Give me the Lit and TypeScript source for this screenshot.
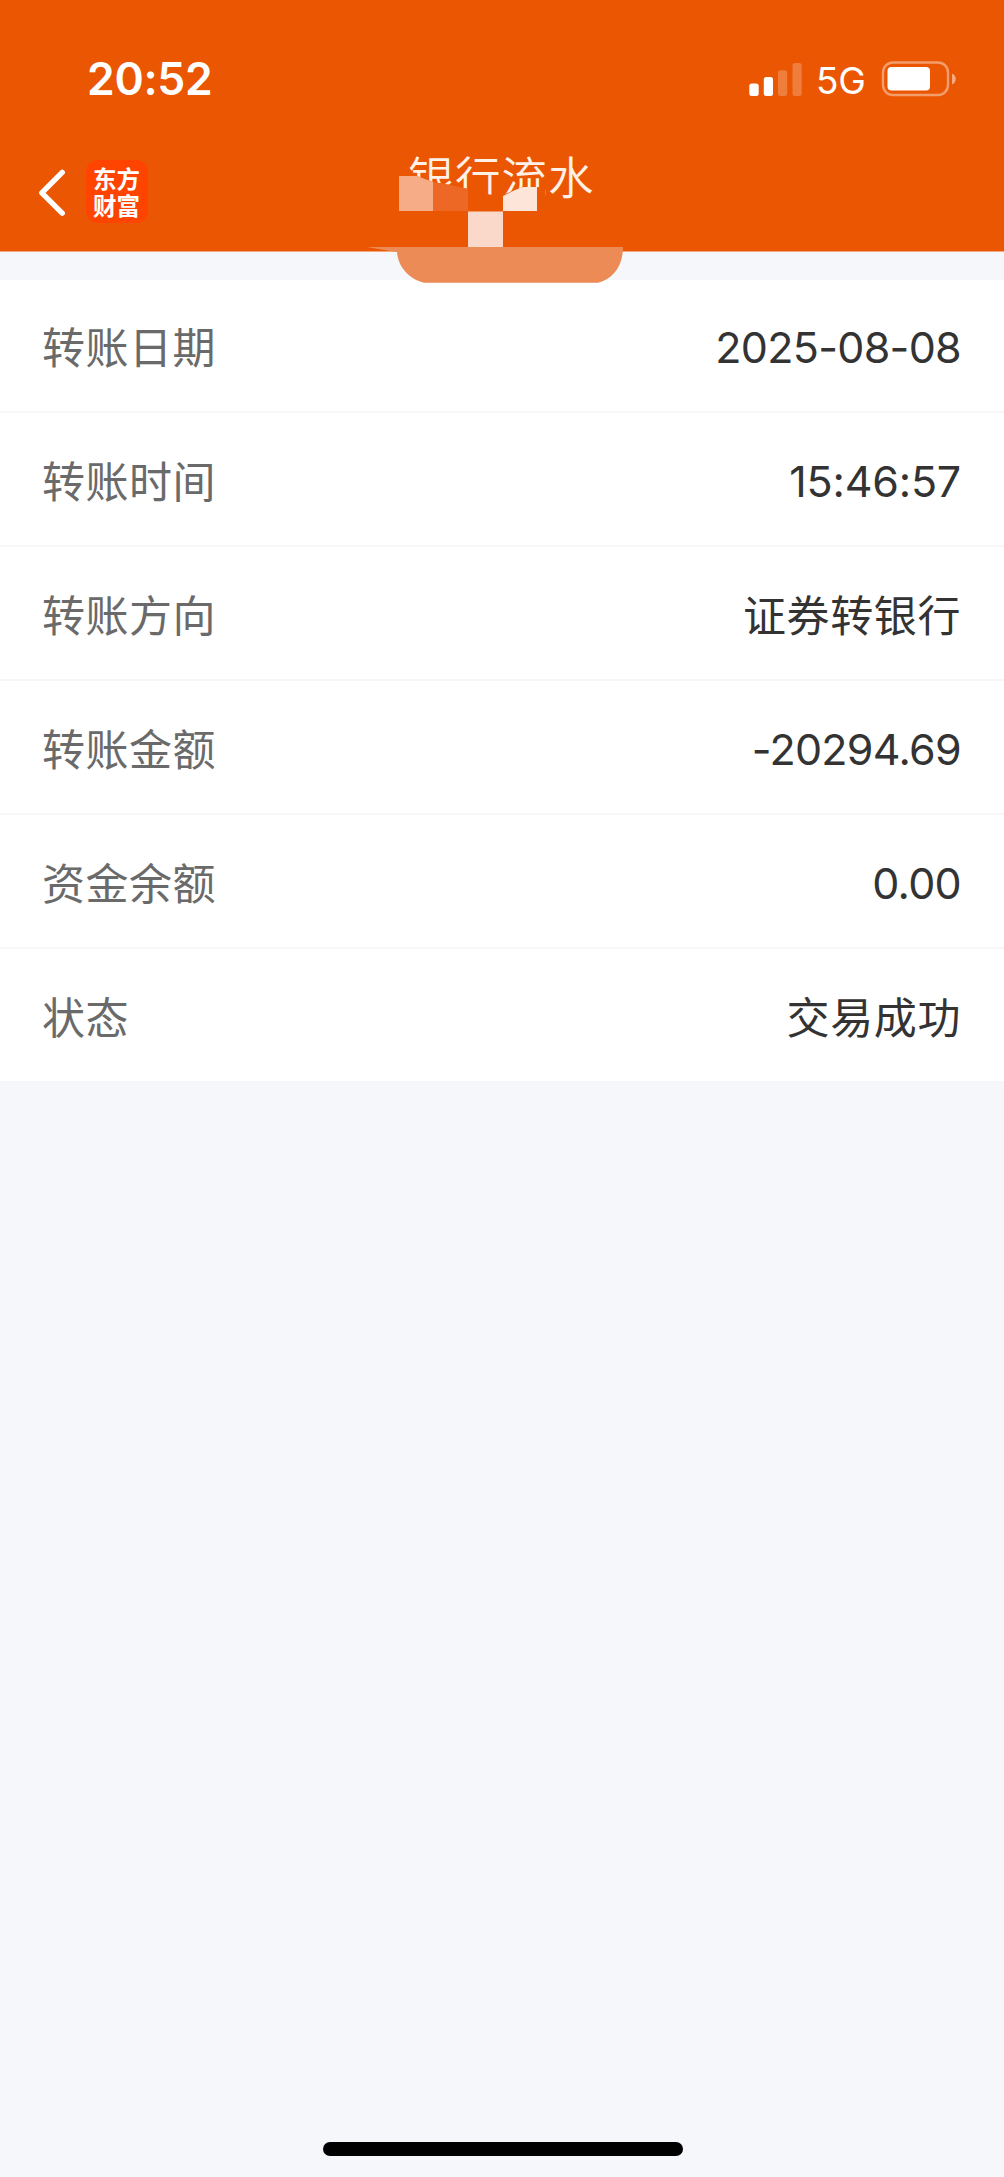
import { LitElement, html, css } from "lit";
import { customElement, property } from "lit/decorators.js";

interface Entry {
  label: string;
  value: string;
  kind: "date" | "time" | "amount" | "text";
}

const entries: Entry[] = [
  { label: "转账日期", value: "2025-08-08", kind: "date" },
  { label: "转账时间", value: "15:46:57", kind: "time" },
  { label: "转账方向", value: "证券转银行", kind: "text" },
  { label: "转账金额", value: "-20294.69", kind: "amount" },
  { label: "资金余额", value: "0.00", kind: "amount" },
  { label: "状态", value: "交易成功", kind: "text" },
];

@customElement("status-bar")
class StatusBar extends LitElement {
  static styles = css`
    :host {
      display: flex;
      justify-content: space-between;
      align-items: center;
      box-sizing: border-box;
      height: 115px;
      padding: 43px 47px 0 87px;
      color: #fff;
      font-family: Inter, "Noto Sans CJK SC", sans-serif;
    }
    .time {
      font-size: 44.5px;
      line-height: 72px;
      font-weight: 600;
      letter-spacing: -0.3px;
    }
    .right {
      display: flex;
      align-items: center;
      height: 72px;
    }
    .net {
      width: 49px;
      margin: 3px 16px 0 13px;
      font-size: 37px;
      line-height: 72px;
      font-weight: 400;
      letter-spacing: -0.3px;
      white-space: nowrap;
    }
    svg {
      display: block;
    }
  `;

  render() {
    return html`
      <span class="time">20:52</span>
      <div class="right">
        <svg width="54" height="35" viewBox="0 0 54 35" fill="#fff">
          <rect x="0.3" y="21.5" width="9.4" height="12.5" rx="2.5" />
          <rect x="14.8" y="15" width="9.2" height="19" rx="2.5" />
          <rect x="29" y="8.3" width="9.2" height="25.7" rx="2.5" opacity="0.23" />
          <rect x="43.5" y="1" width="9.2" height="33" rx="2.5" opacity="0.23" />
        </svg>
        <span class="net">5G</span>
        <svg width="76" height="36" viewBox="0 0 76 36">
          <rect x="2" y="1.5" width="65" height="32.5" rx="10" fill="none" stroke="#fff" stroke-opacity="0.42" stroke-width="2.4" />
          <rect x="6.5" y="6" width="42.5" height="23.5" rx="4" fill="#fff" />
          <path d="M71 12.5c5 2 5 9 0 11z" fill="#fff" opacity="0.5" />
        </svg>
      </div>
    `;
  }
}

@customElement("nav-bar")
class NavBar extends LitElement {
  static styles = css`
    :host {
      display: grid;
      grid-template-columns: 1fr auto 1fr;
      box-sizing: border-box;
      height: 136px;
      padding: 0 38px 0 37px;
      position: relative;
      font-family: "Noto Sans CJK SC", sans-serif;
    }
    .left {
      display: flex;
      align-items: flex-start;
      gap: 21px;
      padding-top: 45px;
    }
    .back {
      display: block;
      margin-top: 8px;
    }
    .logo {
      display: flex;
      flex-direction: column;
      box-sizing: border-box;
      width: 62px;
      height: 63px;
      padding: 5px 0 0 7px;
      border-radius: 12px;
      background: #ff4400;
      color: #fff;
      font-size: 23.5px;
      line-height: 27px;
      font-weight: 700;
      white-space: nowrap;
    }
    .title {
      padding-top: 26px;
      color: #fff0e8;
      font-size: 45.5px;
      line-height: 68px;
      font-weight: 350;
      letter-spacing: 1.1px;
    }
    .mask {
      position: absolute;
      left: 360px;
      top: 45px;
    }
  `;

  render() {
    return html`
      <div class="left">
        <svg class="back" width="28" height="50" viewBox="0 0 28 50">
          <path d="M25.2 4.4 4.8 24.8 25.2 45.2" fill="none" stroke="#fff" stroke-width="5.4" stroke-linecap="round" stroke-linejoin="round" />
        </svg>
        <div class="logo"><span>东方</span><span>财富</span></div>
      </div>
      <div class="title">银行流水</div>
      <svg class="mask" width="280" height="124" viewBox="360 160 280 124">
        <path d="M399 176H417L433 182L450 185L468 189L480 193L500 196L515 190L523 187H537L545 188V247H399Z" fill="#eb5602" />
        <path d="M399 176H417L433 182V211H399Z" fill="#f5ac87" />
        <path d="M433 182L450 185L468 189V211H433Z" fill="#ec6824" />
        <path d="M503 196L515 190L523 187H537V211H503Z" fill="#fde5d9" />
        <rect x="468" y="211.5" width="35" height="35.5" fill="#fad9ca" />
        <path d="M367 247H623C623 266 613 279 598 282.7H424C409 279 398 267 397 252L387 250.5Z" fill="#ec8b56" />
      </svg>
    `;
  }
}

@customElement("detail-row")
class DetailRow extends LitElement {
  @property() label = "";
  @property() value = "";
  @property() kind = "text";

  static styles = css`
    :host {
      display: flex;
      justify-content: space-between;
      align-items: flex-start;
      box-sizing: border-box;
      height: 134px;
      padding: 37px 43px 0 42px;
      border-bottom: 2px solid #f7f7f8;
      background: #fff;
      font-family: Inter, "Noto Sans CJK SC", sans-serif;
      font-size: 43px;
      line-height: 64px;
    }
    :host(:first-child) {
      height: 133px;
      padding-top: 36px;
    }
    :host(:last-child) {
      height: 132px;
      border-bottom: none;
    }
    .label {
      color: #6a6a6a;
      letter-spacing: 0.5px;
    }
    .value {
      color: #333;
      letter-spacing: 0.6px;
    }
    .date,
    .amount,
    .time {
      margin-top: -1px;
      letter-spacing: -0.7px;
    }
    .time {
      letter-spacing: -0.2px;
    }
  `;

  render() {
    return html`
      <span class="label">${this.label}</span>
      <span class="value ${this.kind}">${this.value}</span>
    `;
  }
}

@customElement("app-root")
class AppRoot extends LitElement {
  static styles = css`
    :host {
      display: flex;
      flex-direction: column;
      box-sizing: border-box;
      width: 1004px;
      height: 2177px;
      overflow: hidden;
      background: #f6f7fa;
    }
    .header {
      height: 251px;
      background: #eb5602;
      border-bottom: 1px solid #f3a77e;
    }
    .list {
      margin-top: 28px;
    }
    .home {
      width: 360px;
      height: 14px;
      margin: auto auto 21px 322.5px;
      border-radius: 7px;
      background: #000;
    }
  `;

  render() {
    return html`
      <div class="header">
        <status-bar></status-bar>
        <nav-bar></nav-bar>
      </div>
      <div class="list">
        ${entries.map((e) => html`<detail-row .label=${e.label} .value=${e.value} .kind=${e.kind}></detail-row>`)}
      </div>
      <div class="home"></div>
    `;
  }
}
